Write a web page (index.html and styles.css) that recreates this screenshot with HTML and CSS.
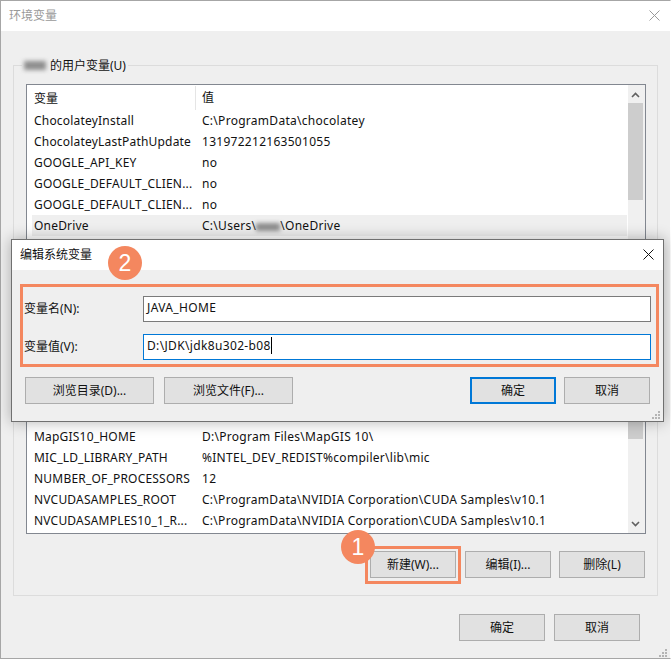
FILE: index.html
```html
<!DOCTYPE html>
<html lang="zh">

<head>
  <meta charset="UTF-8">
  <title>环境变量</title>
  <link rel="stylesheet" href="styles.css">
</head>

<body>
  <div class="window">
    <div class="titlebar">
      <span class="title muted">环境变量</span>
      <svg class="close" width="11" height="11" viewBox="0 0 11 11"><path d="M0.5 0.5L10.5 10.5M10.5 0.5L0.5 10.5" stroke="#9a9a9a" fill="none"/></svg>
    </div>
    <div class="content">
      <div class="group">
        <div class="legend"><span class="blur blur-name"></span>的用户变量(U)</div>
        <div class="list">
          <div class="list-main">
            <div class="list-head">
              <span class="col-name">变量</span>
              <span class="col-value">值</span>
            </div>
            <div class="row"><span class="col-name">ChocolateyInstall</span><span class="col-value">C:\ProgramData\chocolatey</span></div>
            <div class="row"><span class="col-name">ChocolateyLastPathUpdate</span><span class="col-value">131972212163501055</span></div>
            <div class="row"><span class="col-name">GOOGLE_API_KEY</span><span class="col-value">no</span></div>
            <div class="row"><span class="col-name">GOOGLE_DEFAULT_CLIEN...</span><span class="col-value">no</span></div>
            <div class="row"><span class="col-name">GOOGLE_DEFAULT_CLIEN...</span><span class="col-value">no</span></div>
            <div class="row hover"><span class="col-name">OneDrive</span><span class="col-value">C:\Users\<span class="blur blur-user"></span>\OneDrive</span></div>
            <div class="list-gap"></div>
            <div class="row"><span class="col-name">MapGIS10_HOME</span><span class="col-value">D:\Program Files\MapGIS 10\</span></div>
            <div class="row"><span class="col-name">MIC_LD_LIBRARY_PATH</span><span class="col-value">%INTEL_DEV_REDIST%compiler\lib\mic</span></div>
            <div class="row"><span class="col-name">NUMBER_OF_PROCESSORS</span><span class="col-value">12</span></div>
            <div class="row"><span class="col-name">NVCUDASAMPLES_ROOT</span><span class="col-value">C:\ProgramData\NVIDIA Corporation\CUDA Samples\v10.1</span></div>
            <div class="row"><span class="col-name">NVCUDASAMPLES10_1_R...</span><span class="col-value">C:\ProgramData\NVIDIA Corporation\CUDA Samples\v10.1</span></div>
          </div>
          <div class="scrollbar">
            <svg class="arrow" width="9" height="6" viewBox="0 0 9 6"><path d="M1 5L4.5 1.5L8 5" stroke="#606060" stroke-width="1.6" fill="none"/></svg>
            <div class="thumb thumb-top"></div>
            <div class="track-gap"></div>
            <div class="thumb thumb-bottom"></div>
            <svg class="arrow arrow-down" width="9" height="6" viewBox="0 0 9 6"><path d="M1 1L4.5 4.5L8 1" stroke="#606060" stroke-width="1.6" fill="none"/></svg>
          </div>
        </div>
        <div class="group-actions">
          <button class="btn btn-new">新建(W)...</button>
          <button class="btn">编辑(I)...</button>
          <button class="btn">删除(L)</button>
        </div>
      </div>
      <div class="footer">
        <button class="btn">确定</button>
        <button class="btn">取消</button>
      </div>
    </div>
    <svg class="grip grip-main" width="8" height="8" viewBox="0 0 8 8"><path d="M6 0h2v2h-2zM3 3h2v2h-2zM6 3h2v2h-2zM0 6h2v2h-2zM3 6h2v2h-2zM6 6h2v2h-2z" fill="#b4b4b4"/></svg>
  </div>

  <div class="dialog">
    <div class="titlebar dialog-titlebar">
      <span class="title">编辑系统变量</span>
      <svg class="close" width="11" height="11" viewBox="0 0 11 11"><path d="M0.5 0.5L10.5 10.5M10.5 0.5L0.5 10.5" stroke="#111" fill="none"/></svg>
    </div>
    <div class="dialog-body">
      <div class="fields">
        <div class="field">
          <label class="field-label">变量名(N):</label>
          <div class="input">JAVA_HOME</div>
        </div>
        <div class="field">
          <label class="field-label">变量值(V):</label>
          <div class="input focus">D:\JDK\jdk8u302-b08<span class="caret"></span></div>
        </div>
      </div>
      <div class="dialog-actions">
        <button class="btn btn-wide">浏览目录(D)...</button>
        <button class="btn btn-wide">浏览文件(F)...</button>
        <span class="spacer"></span>
        <button class="btn btn-default">确定</button>
        <button class="btn">取消</button>
      </div>
    </div>
    <svg class="grip grip-dialog" width="8" height="8" viewBox="0 0 8 8"><path d="M6 0h2v2h-2zM3 3h2v2h-2zM6 3h2v2h-2zM0 6h2v2h-2zM3 6h2v2h-2zM6 6h2v2h-2z" fill="#b4b4b4"/></svg>
  </div>

  <div class="mark mark-fields"></div>
  <div class="mark mark-new"></div>
  <div class="badge badge-1">1</div>
  <div class="badge badge-2">2</div>
</body>

</html>
```

FILE: styles.css
```css
html,
body {
  margin: 0;
  padding: 0;
}

body {
  position: relative;
  width: 671px;
  height: 659px;
  overflow: hidden;
  background: #fff;
  color: #111;
  font-family: "Noto Sans", "Noto Sans CJK SC", sans-serif;
  font-size: 12px;
}

.window {
  position: relative;
  box-sizing: border-box;
  width: 671px;
  height: 659px;
  border: 1px solid #a6a6a6;
  border-right-color: #fff;
  display: flex;
  flex-direction: column;
  background: #efefef;
}

.titlebar {
  box-sizing: border-box;
  height: 30px;
  flex: none;
  background: #fff;
  display: flex;
  align-items: center;
  justify-content: space-between;
  padding: 0 10px 2px 8px;
}

.dialog-titlebar {
  padding-right: 9px;
}

.title {
  font-size: 12px;
}

.muted {
  color: #999;
}

.content {
  flex: 1;
  padding: 34px 12px 0 12px;
  display: flex;
  flex-direction: column;
}

.group {
  position: relative;
  box-sizing: border-box;
  height: 531px;
  border: 1px solid #dcdcdc;
  padding: 18px 11px 0 12px;
}

.legend {
  position: absolute;
  top: -9px;
  left: 8px;
  padding: 0 2px;
  background: #efefef;
  line-height: 17px;
  display: flex;
  align-items: center;
}

.blur {
  display: inline-block;
  background: #8e8e8e;
  filter: blur(2px);
}

.blur-name {
  width: 22px;
  height: 9px;
  margin-right: 4px;
}

.blur-user {
  width: 24px;
  height: 8px;
  vertical-align: -1px;
}

.list {
  box-sizing: border-box;
  height: 450px;
  border: 1px solid #828790;
  background: #fff;
  display: flex;
}

.list-main {
  flex: 1;
  min-width: 0;
  display: flex;
  flex-direction: column;
  padding: 1px 0 2px 5px;
}

.list-head {
  height: 24px;
  flex: none;
  display: flex;
  align-items: center;
}

.list-head .col-value {
  border-left: 1px solid #e5e5e5;
  height: 24px;
  line-height: 24px;
  padding-left: 6px;
  width: 300px;
  box-sizing: border-box;
}

.row {
  height: 21px;
  flex: none;
  line-height: 21px;
  display: flex;
  white-space: nowrap;
}

.hover {
  background: #efefef;
}

.col-name {
  width: 163px;
  flex: none;
  padding-left: 2px;
  box-sizing: border-box;
}

.row .col-name {
  width: 170px;
  letter-spacing: 0.2px;
}

.row .col-value {
  letter-spacing: 0.28px;
}

.list-gap {
  flex: 1;
}

.scrollbar {
  box-sizing: border-box;
  width: 18px;
  flex: none;
  background: #f0f0f0;
  border-left: 1px solid #fff;
  padding-right: 2px;
  display: flex;
  flex-direction: column;
  align-items: center;
}

.arrow {
  flex: none;
  margin-top: 7px;
}

.arrow-down {
  margin: 4px 0 6px;
}

.thumb {
  width: 15px;
  flex: none;
  background: #cdcdcd;
}

.thumb-top {
  height: 97px;
  margin-top: 5px;
}

.thumb-bottom {
  height: 19px;
  margin-bottom: 78px;
}

.track-gap {
  flex: 1;
}

.group-actions {
  display: flex;
  justify-content: flex-end;
  gap: 8px;
  margin-top: 17px;
  padding-right: 1px;
}

.btn-new {
  margin-right: 1px;
}

.btn {
  box-sizing: border-box;
  width: 86px;
  height: 27px;
  padding: 0 0 2px;
  border: 1px solid #adadad;
  background: #e1e1e1;
  color: #111;
  font: inherit;
}

.footer {
  display: flex;
  justify-content: flex-end;
  gap: 9px;
  margin-top: 18px;
  padding-right: 18px;
}

.dialog {
  position: absolute;
  left: 11px;
  top: 239px;
  box-sizing: border-box;
  width: 653px;
  height: 183px;
  border: 1px solid #707070;
  background: #efefef;
  box-shadow: 0 0 14px rgba(0, 0, 0, 0.3);
  display: flex;
  flex-direction: column;
}

.dialog-body {
  flex: 1;
  padding: 26px 12px 0 12px;
}

.fields {
  display: flex;
  flex-direction: column;
  gap: 12px;
}

.field {
  display: flex;
  align-items: center;
}

.field-label {
  width: 119px;
  flex: none;
  padding-bottom: 2px;
}

.input {
  flex: 1;
  box-sizing: border-box;
  height: 26px;
  line-height: 22px;
  padding-left: 3px;
  border: 1px solid #7a7a7a;
  background: #fff;
  letter-spacing: 0.35px;
}

.focus {
  border-color: #0078d7;
}

.caret {
  display: inline-block;
  width: 1px;
  height: 17px;
  background: #000;
  vertical-align: -4px;
}

.dialog-actions {
  display: flex;
  gap: 10px;
  margin-top: 17px;
  padding: 0 1px;
}

.btn-wide {
  width: 129px;
}

.spacer {
  flex: 1;
}

.btn-default {
  border: 2px solid #0078d7;
  margin-right: -2px;
}

.grip {
  position: absolute;
}

.grip-main {
  right: 3px;
  bottom: 1px;
}

.grip-dialog {
  right: 3px;
  bottom: 2px;
}

.mark {
  position: absolute;
  box-sizing: border-box;
  border: 3px solid #f4875f;
}

.mark-fields {
  left: 20px;
  top: 284px;
  width: 639px;
  height: 83px;
}

.mark-new {
  left: 365px;
  top: 546px;
  width: 96px;
  height: 38px;
}

.badge {
  position: absolute;
  width: 34px;
  height: 34px;
  border-radius: 50%;
  background: #f4875f;
  color: #fff;
  font-family: "Liberation Sans", sans-serif;
  font-size: 23px;
  line-height: 34px;
  text-align: center;
}

.badge-1 {
  left: 341px;
  top: 530px;
}

.badge-2 {
  left: 108px;
  top: 246px;
}
```
